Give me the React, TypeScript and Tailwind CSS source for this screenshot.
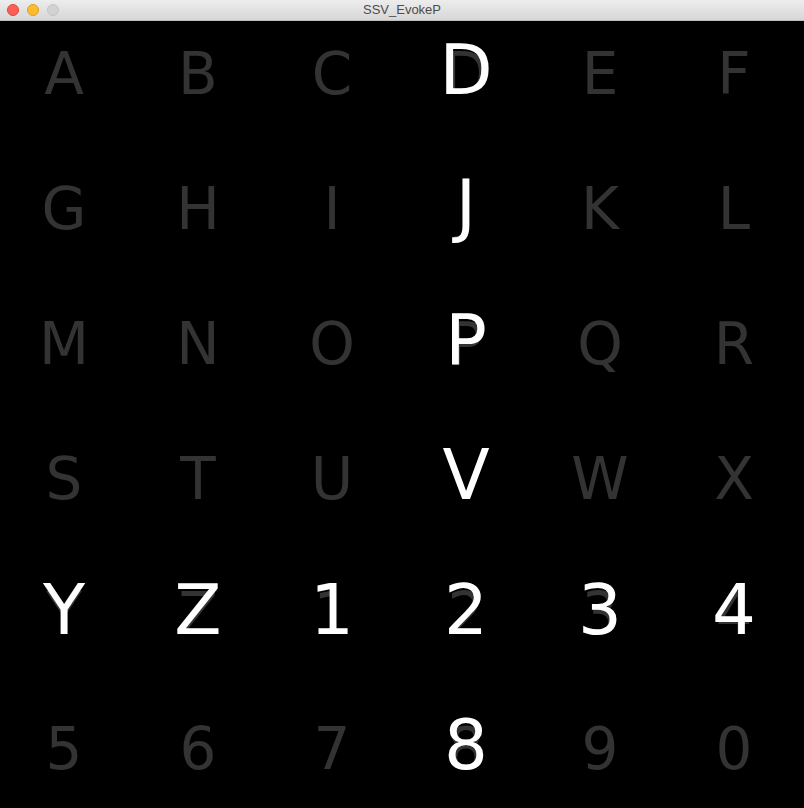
import React from 'react';

const ROWS: string[][] = [
  ['A', 'B', 'C', 'D', 'E', 'F'],
  ['G', 'H', 'I', 'J', 'K', 'L'],
  ['M', 'N', 'O', 'P', 'Q', 'R'],
  ['S', 'T', 'U', 'V', 'W', 'X'],
  ['Y', 'Z', '1', '2', '3', '4'],
  ['5', '6', '7', '8', '9', '0'],
];

// flashing row / column of the speller
const ACTIVE_ROW = 4;
const ACTIVE_COL = 3;

function Cell({ char, lit }: { char: string; lit: boolean }) {
  return (
    <div className="grid h-[135px] content-start items-baseline justify-items-center pt-[15px]">
      <span className="[grid-area:1/1] text-[58px] leading-[77px] text-[#333333]">{char}</span>
      {lit && <span className="[grid-area:1/1] text-[69px] leading-none text-white">{char}</span>}
    </div>
  );
}

export default function App() {
  return (
    <div className="w-[804px] h-[808px] overflow-hidden bg-black">
      {/* window title bar */}
      <div className="relative flex h-[21px] items-center justify-center border-b border-[#bdbdbd] bg-gradient-to-b from-[#ededed] to-[#d7d7d7]">
        <div className="absolute left-[7px] top-[4px] flex gap-[8px]">
          <span className="h-[12px] w-[12px] rounded-full border border-[#e0443e] bg-[#fd5f57]" />
          <span className="h-[12px] w-[12px] rounded-full border border-[#dea123] bg-[#fdbc2e]" />
          <span className="h-[12px] w-[12px] rounded-full border border-[#c4c4c4] bg-[#d2d2d2]" />
        </div>
        <span className="text-[13px] text-[#4d4d4d] font-['Liberation_Sans',sans-serif]">SSV_EvokeP</span>
      </div>

      <div className="h-[787px] overflow-hidden">
        <div className="ml-[-3px] grid grid-cols-[repeat(6,134px)] font-['DejaVu_Sans',sans-serif]">
          {ROWS.map((row, r) =>
            row.map((ch, c) => <Cell key={ch} char={ch} lit={r === ACTIVE_ROW || c === ACTIVE_COL} />),
          )}
        </div>
      </div>
    </div>
  );
}
